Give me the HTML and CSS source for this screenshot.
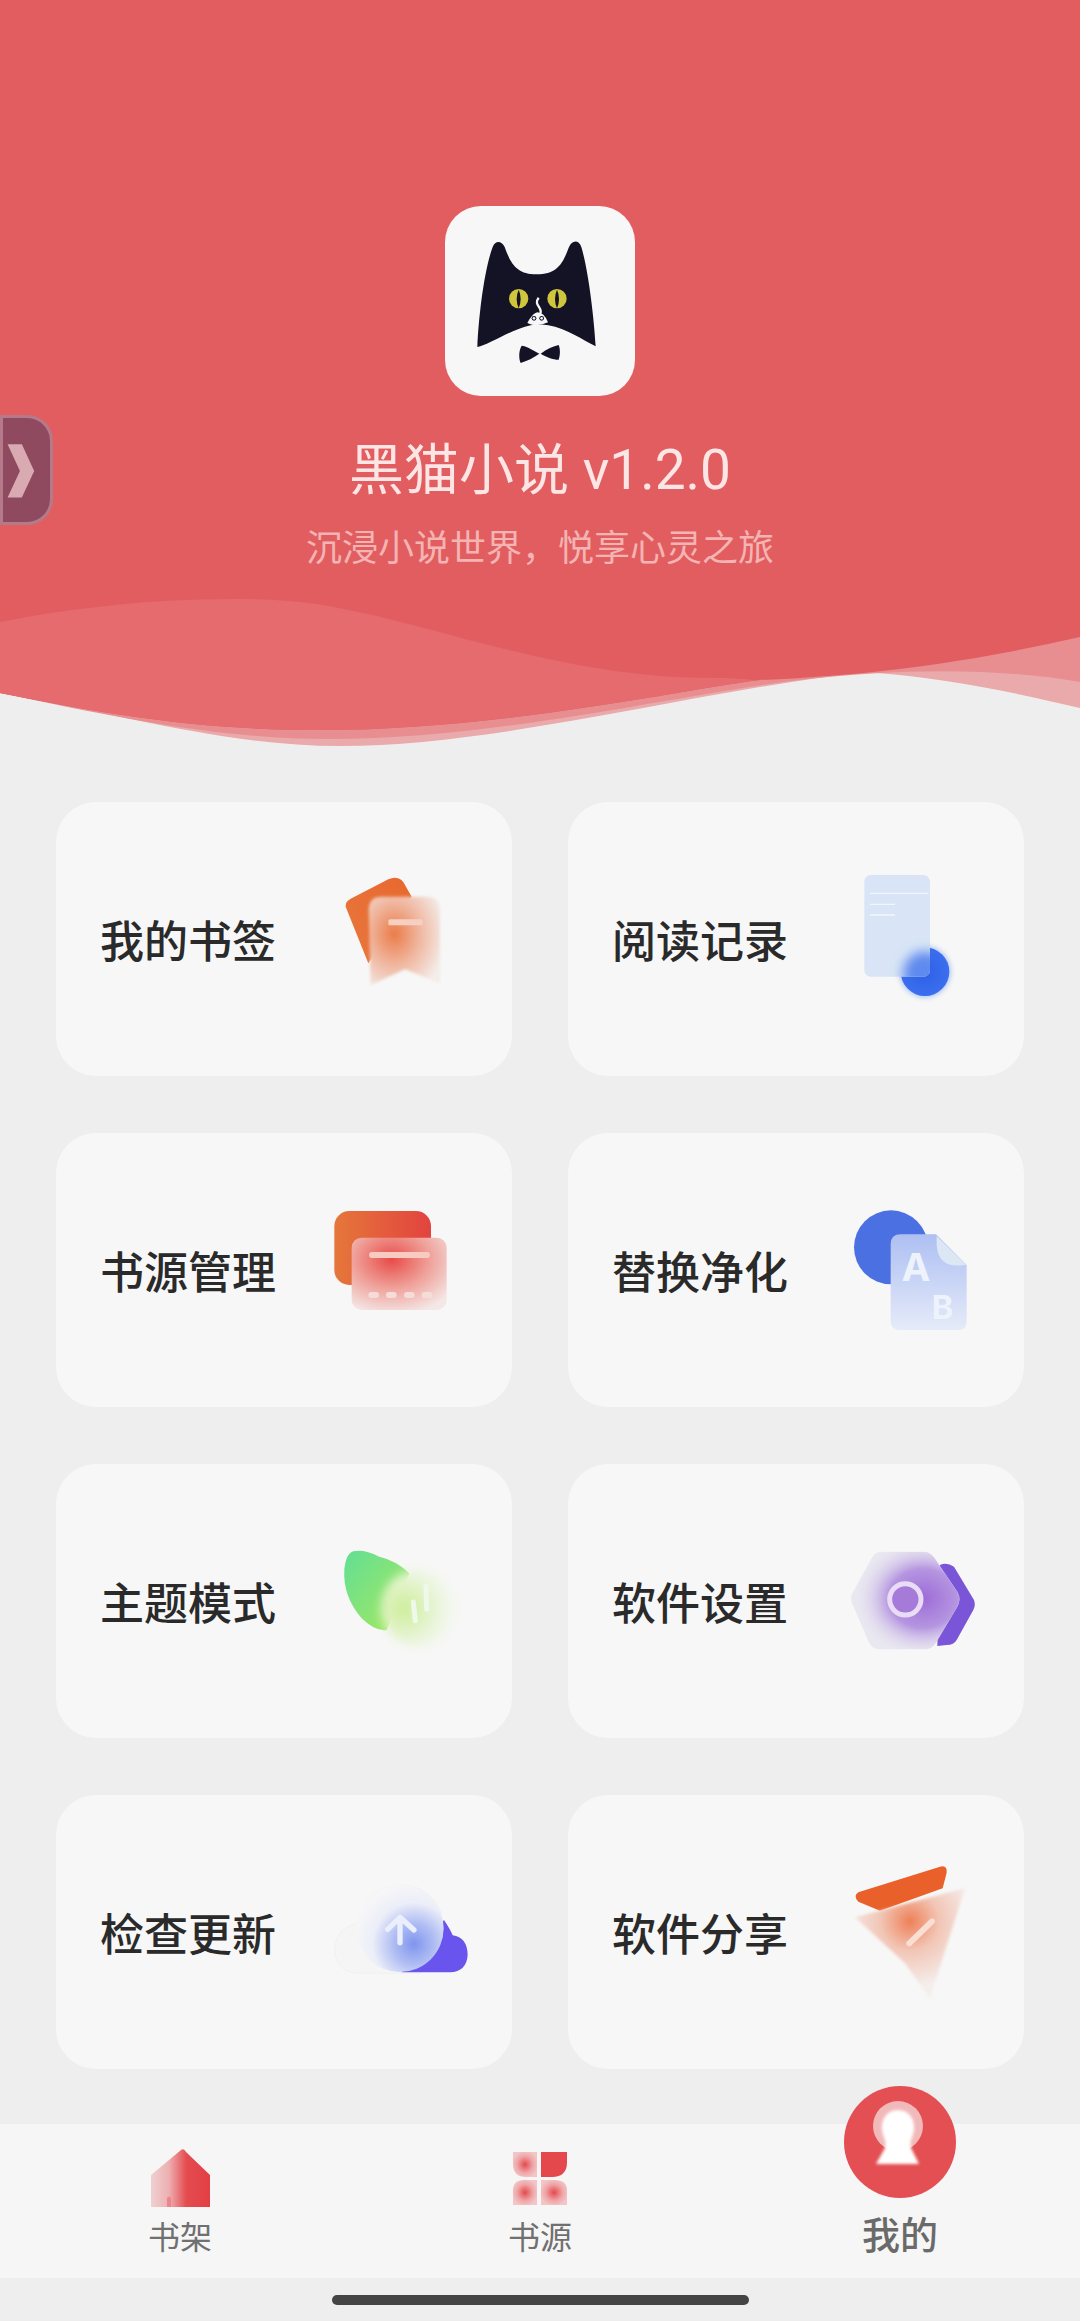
FILE: index.html
```html
<!DOCTYPE html>
<html lang="zh">
<head>
<meta charset="utf-8">
<title>黑猫小说</title>
<link rel="stylesheet" href="styles.css">
</head>
<body>
<svg class="sprite" width="0" height="0" aria-hidden="true">
  <defs>
    <filter id="b8" x="-50%" y="-50%" width="200%" height="200%"><feGaussianBlur stdDeviation="8"/></filter>
    <filter id="b5" x="-20%" y="-20%" width="140%" height="140%"><feGaussianBlur stdDeviation="5"/></filter>
    <filter id="b14" x="-50%" y="-50%" width="200%" height="200%"><feGaussianBlur stdDeviation="14"/></filter>
    <filter id="b18" x="-50%" y="-50%" width="200%" height="200%"><feGaussianBlur stdDeviation="18"/></filter>
    <filter id="b3" x="-20%" y="-20%" width="140%" height="140%"><feGaussianBlur stdDeviation="1.5"/></filter>
    <linearGradient id="gOrange" x1="0" y1="1" x2="1" y2="0"><stop offset="0" stop-color="#e8773d"/><stop offset="1" stop-color="#e8682f"/></linearGradient>
    <linearGradient id="gCard" x1="0" y1="0" x2="1" y2="0"><stop offset="0" stop-color="#e5773a"/><stop offset="1" stop-color="#e2433f"/></linearGradient>
    <linearGradient id="gLeaf" x1="0" y1="0" x2="1" y2="1"><stop offset="0" stop-color="#62df95"/><stop offset="1" stop-color="#a8e85c"/></linearGradient>
    <linearGradient id="gHouse" x1="0" y1="0" x2="1" y2="0"><stop offset="0" stop-color="#efd0d1"/><stop offset=".3" stop-color="#eeb0b2"/><stop offset=".6" stop-color="#e44c50"/><stop offset="1" stop-color="#e33f44"/></linearGradient>
    <radialGradient id="gBlue" cx=".5" cy=".5" r=".6"><stop offset="0" stop-color="#2f5fe6"/><stop offset="1" stop-color="#3d72f0"/></radialGradient>
    <radialGradient id="gPurple" cx=".62" cy=".5" r=".55"><stop offset="0" stop-color="#9d6cd8"/><stop offset=".5" stop-color="#b595e0"/><stop offset="1" stop-color="#e6e3ef" stop-opacity="0"/></radialGradient>
    <radialGradient id="gCloud" cx=".66" cy=".68" r=".68"><stop offset="0" stop-color="#7f95ee"/><stop offset=".35" stop-color="#b0bdf3"/><stop offset=".7" stop-color="#eceef8"/><stop offset="1" stop-color="#f6f6f8"/></radialGradient>
    <radialGradient id="gPlane" cx=".5" cy=".3" r=".6"><stop offset="0" stop-color="#ee8057"/><stop offset=".45" stop-color="#f2c6b6"/><stop offset="1" stop-color="#f4eeec"/></radialGradient>
    <radialGradient id="gBook" cx=".36" cy=".42" r=".72"><stop offset="0" stop-color="#ea7c49"/><stop offset=".5" stop-color="#f0b7a0"/><stop offset="1" stop-color="#f3ece8"/></radialGradient>
    <radialGradient id="gSrc" cx=".42" cy=".3" r=".78"><stop offset="0" stop-color="#e84b47"/><stop offset=".5" stop-color="#ef9f98"/><stop offset="1" stop-color="#f4e8e6"/></radialGradient>
    <linearGradient id="gAb" x1="0" y1="0" x2="0" y2="1"><stop offset="0" stop-color="#aebff2"/><stop offset=".5" stop-color="#c9d5f6"/><stop offset="1" stop-color="#e5ebf8"/></linearGradient>
    <radialGradient id="gSeed" cx=".3" cy=".5" r=".75"><stop offset="0" stop-color="#cdee98"/><stop offset=".5" stop-color="#e6f4d2"/><stop offset="1" stop-color="#f6f8f2" stop-opacity=".15"/></radialGradient>
    <radialGradient id="gPetal" cx=".5" cy=".5" r=".55"><stop offset="0" stop-color="#e4494d"/><stop offset=".6" stop-color="#efa5a7"/><stop offset="1" stop-color="#f2c6c7"/></radialGradient>
    <clipPath id="cDoc"><rect x="103" y="75" width="197" height="305" rx="20"/></clipPath>
    <clipPath id="cHex"><path d="M155 65H280Q300 65 312 82L382 185Q395 208 382 230L318 338Q305 358 285 358H150Q130 358 118 340L70 228Q58 208 68 188L125 85Q135 65 155 65Z"/></clipPath>
  </defs>
</svg>

<div class="page">
  <header class="hero">
    <svg class="hero-wave" viewBox="0 0 1080 760" aria-hidden="true">
      <path fill="#eaa9aa" d="M0 692C120 715 230 746 340 746C500 746 700 690 865 672C950 678 1020 694 1080 708V0H0Z"/>
      <path fill="#e88e90" d="M0 693C120 718 220 739 330 739C500 739 690 692 800 680C900 668 1000 668 1080 682V0H0Z"/>
      <path fill="#e25d60" d="M0 693C110 715 200 730 320 730C500 730 680 690 760 680C880 675 980 660 1080 637V0H0Z"/>
      <path fill="#e56b6e" d="M0 622C90 604 190 596 275 600C400 606 540 680 720 678C740 678 750 680 760 680C680 690 500 730 320 730C200 730 110 715 0 693Z"/>
    </svg>
    <div class="hero-inner">
      <div class="logo">
        <svg class="logo-cat" viewBox="75 47 570 570" aria-hidden="true">
          <path fill="#141326" d="M172 470C176 380 192 240 218 170C226 150 244 150 254 170C272 220 290 252 350 252C410 252 428 222 446 172C456 148 476 148 484 170C505 240 522 380 527 468C490 450 440 415 385 405C372 402 345 402 332 405C270 418 205 465 172 470Z"/>
          <ellipse cx="296" cy="325" rx="29" ry="29" fill="#cfc63d"/>
          <ellipse cx="411" cy="325" rx="29" ry="29" fill="#cfc63d"/>
          <path fill="#141326" d="M296 298Q284 325 296 354Q308 325 296 298ZM411 298Q399 325 411 354Q423 325 411 298Z"/>
          <path fill="none" stroke="#f7f7f7" stroke-width="7" d="M356 322C338 345 372 352 360 372"/>
          <path fill="#f7f7f7" d="M322 398Q338 368 352 366Q372 366 384 396Q350 412 322 398Z"/>
          <circle cx="342" cy="384" r="7" fill="#141326"/><circle cx="365" cy="384" r="7" fill="#141326"/>
          <circle cx="342" cy="384" r="4" fill="#f7f7f7"/><circle cx="365" cy="384" r="4" fill="#f7f7f7"/>
          <path fill="#141326" d="M358 490C335 478 318 466 305 466C296 480 296 505 302 518C320 512 342 502 358 490ZM362 490C380 476 400 468 416 464C422 478 420 498 416 508C398 508 378 500 362 490Z"/>
        </svg>
      </div>
      <h1 class="title">黑猫小说 v1.2.0</h1>
      <p class="subtitle">沉浸小说世界，悦享心灵之旅</p>
    </div>
  </header>

  <div class="side-handle" aria-hidden="true">
    <svg class="side-chevron" viewBox="0 0 40 60"><polygon points="8,3 23,3 36,31 23,59 8,59 21,31"/></svg>
  </div>

  <main class="grid">
    <a class="card"><span class="card-label">我的书签</span>
      <svg class="card-icon" viewBox="0 0 180 190" aria-hidden="true"><g transform="scale(.3333)">
        <path fill="url(#gOrange)" d="M107 170Q105 155 122 146L235 88Q262 76 280 96L305 140L175 340Z"/>
        <path filter="url(#b5)" fill="url(#gBook)" d="M176 180Q176 140 216 140H350Q390 140 390 180V400L285 358L182 405Z"/>
        <rect x="235" y="208" width="103" height="18" rx="5" fill="#f7cfc0"/>
      </g></svg>
    </a>
    <a class="card"><span class="card-label">阅读记录</span>
      <svg class="card-icon" viewBox="0 0 180 190" aria-hidden="true"><g transform="translate(8 0) scale(.3333)">
        <circle cx="285" cy="365" r="78" fill="#6f96f2" filter="url(#b8)" opacity=".5"/>
        <circle cx="285" cy="365" r="73" fill="url(#gBlue)"/>
        <rect x="103" y="75" width="197" height="305" rx="20" fill="#d9e5f6"/>
        <g clip-path="url(#cDoc)"><circle cx="285" cy="370" r="66" fill="#5f8aee" filter="url(#b18)"/></g>
        <path d="M120 130H295M120 163H195M120 195H195" stroke="#f1f6fb" stroke-width="4" fill="none"/>
      </g></svg>
    </a>
    <a class="card"><span class="card-label">书源管理</span>
      <svg class="card-icon" viewBox="0 0 180 190" aria-hidden="true"><g transform="translate(0 9) scale(.3333)">
        <rect x="73" y="63" width="290" height="222" rx="45" fill="url(#gCard)"/>
        <rect x="125" y="143" width="285" height="217" rx="30" fill="url(#gSrc)" filter="url(#b3)"/>
        <rect x="177" y="186" width="183" height="18" rx="9" fill="#f8cbc2"/>
        <rect x="175" y="306" width="32" height="18" rx="9" fill="#f6dcd8"/>
        <rect x="228" y="306" width="32" height="18" rx="9" fill="#f6dcd8"/>
        <rect x="282" y="306" width="32" height="18" rx="9" fill="#f6dcd8"/>
        <rect x="335" y="306" width="32" height="18" rx="9" fill="#f6dcd8"/>
      </g></svg>
    </a>
    <a class="card"><span class="card-label">替换净化</span>
      <svg class="card-icon" viewBox="0 0 180 190" aria-hidden="true"><g transform="translate(8 9) scale(.3333)">
        <circle cx="183" cy="172" r="111" fill="#4b70e2"/>
        <path fill="url(#gAb)" d="M212 133H318L410 225V395Q410 420 385 420H210Q182 420 182 392V163Q182 133 212 133Z"/>
        <path fill="#dbe7f5" d="M320 138L408 224Q325 240 320 165Z"/>
        <text class="glyph" x="258" y="272" font-size="116" text-anchor="middle">A</text>
        <text class="glyph" x="338" y="388" font-size="98" text-anchor="middle">B</text>
      </g></svg>
    </a>
    <a class="card"><span class="card-label">主题模式</span>
      <svg class="card-icon" viewBox="0 0 180 190" aria-hidden="true"><g transform="translate(10 18) scale(.3333)">
        <path fill="url(#gLeaf)" filter="url(#b3)" d="M100 64Q78 70 73 118Q68 200 125 265Q165 305 200 300L268 130Q230 92 178 80Q130 56 100 64Z"/>
        <circle cx="300" cy="235" r="118" fill="url(#gSeed)" filter="url(#b14)"/>
        <path d="M318 168L320 238M280 216L286 272" stroke="#eef9ec" stroke-width="15" stroke-linecap="round" fill="none"/>
      </g></svg>
    </a>
    <a class="card"><span class="card-label">软件设置</span>
      <svg class="card-icon" viewBox="0 0 180 190" aria-hidden="true"><g transform="translate(8 18) scale(.3333)">
        <path fill="#7b55d8" d="M330 105Q350 95 372 110L432 210Q438 225 430 240L380 330Q372 345 350 345L322 348Z"/>
        <path fill="#e9e7f0" d="M155 65H280Q300 65 312 82L382 185Q395 208 382 230L318 338Q305 358 285 358H150Q130 358 118 340L70 228Q58 208 68 188L125 85Q135 65 155 65Z"/>
        <g clip-path="url(#cHex)"><ellipse cx="235" cy="205" rx="185" ry="160" fill="url(#gPurple)"/></g>
        <circle cx="226" cy="208" r="47" fill="#a67ad9" stroke="#eadcf5" stroke-width="15"/>
      </g></svg>
    </a>
    <a class="card"><span class="card-label">检查更新</span>
      <svg class="card-icon" viewBox="0 0 180 190" aria-hidden="true"><g transform="translate(10 17) scale(.3333)">
        <path fill="#f5f5f5" stroke="#f0f0f0" stroke-width="3" d="M110 340Q40 330 45 260Q50 205 110 190Q135 80 240 75Q330 75 365 160L300 340Z"/>
        <path fill="#6a54ee" d="M372 180Q392 210 398 226Q442 232 443 285Q440 335 390 337H245Z"/>
        <circle cx="240" cy="205" r="131" fill="url(#gCloud)" filter="url(#b3)"/>
        <path d="M240 172V248M203 208L240 172L282 210" stroke="#ebeffc" stroke-width="16" stroke-linecap="round" stroke-linejoin="round" fill="none"/>
      </g></svg>
    </a>
    <a class="card"><span class="card-label">软件分享</span>
      <svg class="card-icon" viewBox="0 0 180 190" aria-hidden="true"><g transform="translate(8 17) scale(.3333)">
        <path fill="#e9602a" d="M85 97L330 20Q352 14 350 38L338 85L150 152L85 125Q68 108 85 97Z"/>
        <path filter="url(#b5)" fill="url(#gPlane)" d="M75 172L405 85L300 415L225 310Z"/>
        <path d="M238 250L306 184" stroke="#f9ded3" stroke-width="18" stroke-linecap="round" fill="none"/>
      </g></svg>
    </a>
  </main>

  <nav class="tabbar">
    <a class="tab">
      <svg class="tab-icon" viewBox="0 0 60 60" aria-hidden="true">
        <path fill="url(#gHouse)" d="M1 27L31 2Q34 0 36 4L60 27V59H1Z"/>
        <path fill="#e9878a" d="M17 59V50Q19 47 21 50V59Z"/>
      </svg>
      <span class="tab-label">书架</span>
    </a>
    <a class="tab">
      <svg class="tab-icon" viewBox="0 0 60 60" aria-hidden="true">
        <path fill="url(#gPetal)" d="M3 4H27V29H16Q3 29 3 16Z"/>
        <path fill="#e4484c" d="M31 4H57V14Q57 29 42 29H31Z"/>
        <path fill="url(#gPetal)" d="M14 32H27V57H3V42Q3 32 14 32Z"/>
        <path fill="url(#gPetal)" d="M31 32H45Q57 32 57 42V57H31Z"/>
      </svg>
      <span class="tab-label">书源</span>
    </a>
    <a class="tab tab-active">
      <span class="tab-bubble">
        <svg class="tab-key" viewBox="0 0 112 112" aria-hidden="true">
          <ellipse cx="54" cy="40" rx="25" ry="25" fill="#f2b9ba"/>
          <path fill="#fff" filter="url(#b3)" d="M54 24C65 24 71 33 70 44C69 52 65 54 67 62L75 78H32L41 62C43 54 39 52 38 44C37 33 43 24 54 24Z"/>
        </svg>
      </span>
      <span class="tab-label">我的</span>
    </a>
  </nav>
  <div class="home-bar"></div>
</div>
</body>
</html>
```

FILE: styles.css
```css
* { box-sizing: border-box; }
html, body { margin: 0; padding: 0; }
body {
  width: 1080px;
  height: 2321px;
  overflow: hidden;
  background: #eeeeee;
  font-family: Roboto, "Noto Sans CJK SC", "Noto Sans", sans-serif;
}
.sprite { position: absolute; }
.page { position: relative; width: 1080px; height: 2321px; }

.hero { position: relative; height: 760px; }
.hero-wave { position: absolute; left: 0; top: 0; width: 1080px; height: 760px; display: block; }
.hero-inner {
  position: relative;
  display: flex;
  flex-direction: column;
  align-items: center;
  padding-top: 206px;
}
.logo {
  width: 190px;
  height: 190px;
  border-radius: 36px;
  background: #f7f7f7;
}
.logo-cat { display: block; width: 190px; height: 190px; }
.title {
  margin: 40px 0 0;
  font-size: 55px;
  line-height: 68px;
  font-weight: 400;
  color: #fbe6e5;
}
.subtitle {
  margin: 20px 0 0;
  font-size: 36px;
  line-height: 50px;
  font-weight: 400;
  color: #f3b4b3;
}

.side-handle {
  position: absolute;
  left: 0;
  top: 415px;
  width: 53px;
  height: 110px;
  display: flex;
  align-items: center;
  justify-content: flex-start;
  border: 3px solid #b57a8a;
  border-radius: 0 26px 26px 0;
  background: #8f4a60;
}
.side-chevron { flex: none; width: 38px; height: 58px; margin-left: -3px; fill: #d9aab2; }

.grid {
  display: grid;
  grid-template-columns: 456px 456px;
  grid-auto-rows: 274px;
  gap: 57px 56px;
  padding: 42px 56px 0;
}
.card {
  display: flex;
  justify-content: space-between;
  align-items: center;
  padding: 0 22px 0 44px;
  border-radius: 40px;
  background: #f7f7f7;
}
.card-label {
  margin-top: 8px;
  font-size: 44px;
  line-height: 60px;
  font-weight: 500;
  color: #2a2a2a;
}
.card-icon {
  align-self: flex-start;
  display: block;
  width: 180px;
  height: 190px;
  margin-top: 48px;
}
.glyph {
  font-family: Inter, "Liberation Sans", sans-serif;
  font-weight: 700;
  fill: #eef3fb;
}

.tabbar {
  display: grid;
  grid-template-columns: repeat(3, 1fr);
  grid-template-rows: 154px;
  align-items: end;
  height: 154px;
  margin-top: 55px;
  background: #f6f6f6;
}
.tab {
  display: flex;
  flex-direction: column;
  align-items: center;
  padding-bottom: 18px;
}
.tab-icon { display: block; width: 60px; height: 60px; margin-bottom: 8px; }
.tab-label { font-size: 32px; line-height: 44px; color: #707070; }
.tab-active { padding-bottom: 19px; }
.tab-active .tab-label { font-size: 38px; line-height: 46px; font-weight: 500; color: #6a6a6a; }
.tab-bubble {
  display: block;
  width: 112px;
  height: 112px;
  margin-bottom: 15px;
  border-radius: 50%;
  background: #e34f52;
}
.tab-key { display: block; width: 112px; height: 112px; }

.home-bar {
  width: 417px;
  height: 10px;
  margin: 17px auto 0;
  border-radius: 5px;
  background: #444444;
}
```
